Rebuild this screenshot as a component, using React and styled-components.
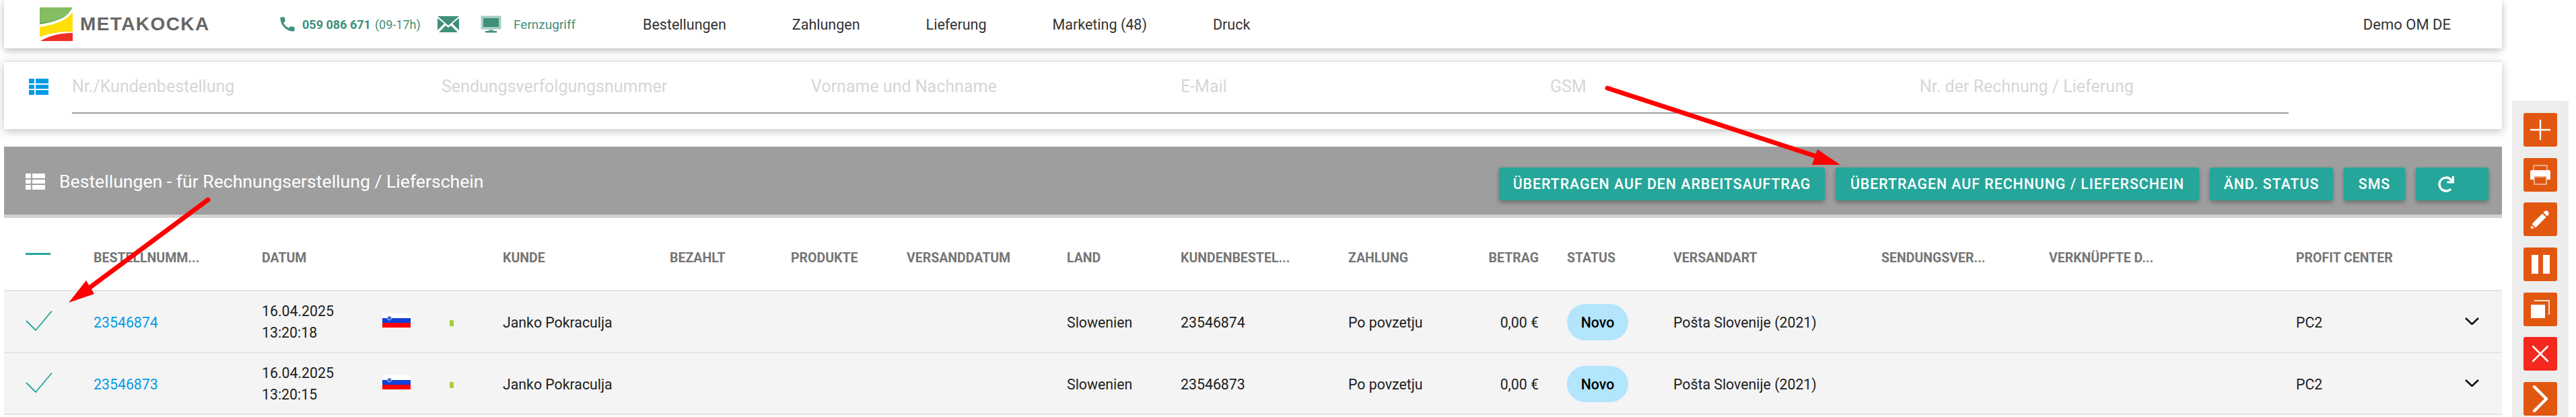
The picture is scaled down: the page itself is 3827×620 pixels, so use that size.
import React from 'react';
import styled, { createGlobalStyle } from 'styled-components';
import { MdCall } from 'react-icons/md';
import { FaRedo } from 'react-icons/fa';

const GlobalStyle = createGlobalStyle`
  html, body {
    margin: 0;
    padding: 0;
    background: #fff;
    overflow: hidden;
  }
  body {
    font-family: Roboto, "Liberation Sans", sans-serif;
    color: #212121;
  }
`;

const Page = styled.div`
  position: relative;
  width: 3827px;
  height: 620px;
  overflow: hidden;
  display: flex;
  align-items: flex-start;
  padding-left: 6px;
  box-sizing: border-box;
`;

const Main = styled.div`
  width: 3711px;
  flex: none;
  display: flex;
  flex-direction: column;
`;

const TopBar = styled.header`
  height: 72px;
  background: #fff;
  box-shadow: 0 3px 10px rgba(0, 0, 0, 0.28);
  display: flex;
  align-items: center;
  padding-left: 53px;
  position: relative;
  z-index: 2;
`;

const Logo = styled.div`
  display: flex;
  align-items: center;
  gap: 11px;
  width: 354px;
  flex: none;
`;

const LogoText = styled.span`
  font-family: "Liberation Sans", Arial, sans-serif;
  font-weight: 700;
  font-size: 28px;
  letter-spacing: 1.4px;
  color: #666;
`;

const Contact = styled.div`
  display: flex;
  align-items: center;
  color: #3f8f79;
  width: 542px;
  flex: none;
  font-size: 18px;
`;

const Phone = styled.span`
  display: flex;
  align-items: center;
  width: 237px;
  flex: none;
  gap: 8px;
  b { font-weight: 700; margin-right: 6px; }
`;

const MailSlot = styled.span`
  display: flex;
  width: 64px;
  flex: none;
`;

const ScreenSlot = styled.span`
  display: flex;
  width: 49px;
  flex: none;
`;

const RemoteLabel = styled.span`
  font-size: 19px;
`;

const Nav = styled.nav`
  display: flex;
  gap: 98px;
  flex: 1;
  font-size: 21.5px;
  color: #333;
`;

const UserName = styled.div`
  font-size: 22px;
  color: #333;
  margin-right: 76px;
`;

const FilterCard = styled.section`
  margin-top: 19px;
  height: 101px;
  box-sizing: border-box;
  background: #fff;
  border-top: 1px solid #ddd;
  box-shadow: 0 3px 12px rgba(0, 0, 0, 0.25);
  display: flex;
  padding: 25px 0 0 37px;
  position: relative;
  z-index: 1;
`;

const FilterIcon = styled.div`
  width: 64px;
  flex: none;
`;

const FilterFields = styled.div`
  width: 3293px;
  height: 50px;
  display: grid;
  grid-template-columns: repeat(6, 549px);
  border-bottom: 2px solid #9e9e9e;
`;

const Placeholder = styled.div`
  font-size: 25px;
  line-height: 24px;
  white-space: nowrap;
  color: #d6d6d6;
`;

const OrdersHead = styled.div`
  margin-top: 26px;
  height: 101px;
  box-sizing: content-box;
  background: #9e9e9e;
  border-bottom: 5px solid #d2d2d2;
  display: flex;
  align-items: flex-start;
  justify-content: space-between;
`;

const OrdersTitle = styled.h2`
  margin: 37px 0 0 32px;
  display: flex;
  align-items: center;
  gap: 21px;
  font-size: 26.6px;
  line-height: 30px;
  font-weight: 400;
  color: #fff;
`;

const Actions = styled.div`
  margin: 31px 20px 0 0;
  display: flex;
  gap: 16px;
`;

const ActionButton = styled.button`
  height: 49px;
  width: ${(props) => props.$width}px;
  border: none;
  border-radius: 3px;
  background: #26a69a;
  color: #fff;
  font-family: inherit;
  font-size: 21.3px;
  font-weight: 500;
  letter-spacing: 1px;
  white-space: nowrap;
  text-transform: uppercase;
  box-shadow: 0 3px 6px rgba(0, 0, 0, 0.3);
  display: flex;
  align-items: center;
  justify-content: ${(props) => (props.$iconOnly ? 'flex-start' : 'center')};
  box-sizing: border-box;
  padding: 0 0 0 ${(props) => (props.$iconOnly ? 33 : 0)}px;
`;

const COLUMNS =
  '101px 250px 179px 100px 79px 248px 180px 172px 238px 169px 249px 150px 133px 42px 158px 309px 249px 367px 251px 21px';

const Table = styled.div`
  background: #fff;
`;

const Row = styled.div`
  display: grid;
  grid-template-columns: ${COLUMNS};
  padding: ${(props) => (props.$head ? 0 : 2)}px 0 0 32px;
  align-items: center;
  box-sizing: border-box;
  height: ${(props) => props.$height}px;
  background: ${(props) => (props.$head ? '#fff' : '#f4f4f4')};
  border-bottom: 2px solid #e4e4e4;
`;

const HeadCell = styled.div`
  font-size: 19.5px;
  font-weight: 700;
  color: #757575;
  white-space: nowrap;
  margin-top: 12px;
  text-align: ${(props) => (props.$right ? 'right' : 'left')};
`;

const CheckDash = styled.div`
  width: 37px;
  height: 3px;
  background: #26a69a;
`;

const CheckBox = styled.div`
  display: flex;
  margin-top: -4px;
`;

const Cell = styled.div`
  font-size: 21.3px;
  color: #212121;
  white-space: nowrap;
  text-align: ${(props) => (props.$right ? 'right' : 'left')};
`;

const DateCell = styled(Cell)`
  line-height: 32px;
`;

const OrderLink = styled.a`
  color: #039be5;
  text-decoration: none;
`;

const FlagBox = styled.div`
  display: flex;
  margin-top: -5px;
`;

const StatusDot = styled.div`
  width: 6px;
  height: 9px;
  margin-top: 3px;
  background: #a8cf38;
`;

const ChevronBox = styled.div`
  display: flex;
  margin-top: -4px;
`;

const Badge = styled.div`
  width: 91px;
  height: 54px;
  border-radius: 27px;
  background: #b3e5fc;
  color: #000;
  font-size: 21.3px;
  font-weight: 500;
  display: flex;
  align-items: center;
  justify-content: center;
`;

const SideRail = styled.aside`
  margin: 150px 0 0 15px;
  width: 84px;
  height: 470px;
  background: #ededed;
  flex: none;
  display: flex;
  flex-direction: column;
  align-items: center;
  gap: 16.7px;
  padding-top: 18px;
  box-sizing: border-box;
`;

const RailButton = styled.div`
  width: 50px;
  height: 50px;
  flex: none;
  border-radius: 3px;
  background: ${(props) => (props.$danger ? '#f4281e' : '#e25710')};
  display: flex;
  align-items: center;
  justify-content: center;
`;

const ArrowLayer = styled.svg`
  position: absolute;
  inset: 0;
  width: 3827px;
  height: 620px;
  pointer-events: none;
  z-index: 5;
`;

const ListIcon = ({ color }) => (
  <svg width="29" height="24" viewBox="0 0 29 24" fill={color}>
    <rect x="0" y="0" width="8" height="7" />
    <rect x="10" y="0" width="19" height="7" />
    <rect x="0" y="9" width="8" height="6" />
    <rect x="10" y="9" width="19" height="6" />
    <rect x="0" y="17" width="8" height="7" />
    <rect x="10" y="17" width="19" height="7" />
  </svg>
);

const LogoMark = () => (
  <svg width="49" height="50" viewBox="0 0 49 50">
    <path d="M0 0H49C41 15 22 22 0 25Z" fill="#84bd62" />
    <path d="M0 25C22 22 41 15 45 7C36 16 20 21 0 23Z" fill="#4f9a45" opacity="0.6" />
    <path d="M49 7V36C28 36 12 39 0 44V29C24 26 41 18 49 7Z" fill="#ffde0a" />
    <path d="M49 38V50H1C12 43 28 38 49 38Z" fill="#f12c26" />
  </svg>
);

const MailIcon = () => (
  <svg width="32" height="24" viewBox="0 0 32 24">
    <path d="M0 0H32L16 14Z" fill="#3f8f79" />
    <path d="M0 3V21L10 11Z" fill="#3f8f79" />
    <path d="M32 3V21L22 11Z" fill="#3f8f79" />
    <path d="M2 24L12 14L16 17L20 14L30 24Z" fill="#3f8f79" />
  </svg>
);

const ScreenIcon = () => (
  <svg width="31" height="26" viewBox="0 0 31 26">
    <rect x="0.5" y="0.5" width="30" height="20" fill="#a9cdc2" />
    <rect x="4" y="4" width="23" height="13" fill="#3f8f79" />
    <rect x="12" y="21" width="7" height="2" fill="#7fb3a3" />
    <rect x="7" y="23" width="17" height="2.5" fill="#3f8f79" />
  </svg>
);

const PlusGlyph = () => (
  <svg width="30" height="30" viewBox="0 0 30 30" stroke="#fff" strokeWidth="2.4">
    <path d="M15 0V30M0 15H30" />
  </svg>
);

const PrintGlyph = () => (
  <svg width="30" height="30" viewBox="0 0 30 30">
    <path d="M5 9V1H25V9" fill="none" stroke="#f3c6ac" strokeWidth="1.4" />
    <path d="M2 8H28Q30 8 30 10V22H24V17H6V22H0V10Q0 8 2 8Z" fill="#fff" />
    <path d="M6 18H24V29H6Z" fill="none" stroke="#f3c6ac" strokeWidth="1.6" />
  </svg>
);

const PencilGlyph = () => (
  <svg width="28" height="28" viewBox="0 0 28 28" fill="#fff">
    <path d="M20 2.5Q23 0 25.5 2.5Q28 5 25.5 8L24 9.5L18.5 4Z" />
    <path d="M17 5.5L22.5 11L7 26.5L1.5 21Z" />
    <path d="M0.5 23L5 27.5L0 28Z" />
  </svg>
);

const PauseGlyph = () => (
  <svg width="27" height="28" viewBox="0 0 27 28" fill="#fff">
    <rect x="0" y="0" width="10" height="28" />
    <rect x="17" y="0" width="10" height="28" />
  </svg>
);

const CopyGlyph = () => (
  <svg width="28" height="28" viewBox="0 0 28 28">
    <path d="M5 1H27V22" fill="none" stroke="#fbe0d0" strokeWidth="2" />
    <rect x="0" y="7" width="21" height="20" fill="#fff" />
  </svg>
);

const CloseGlyph = () => (
  <svg width="24" height="24" viewBox="0 0 24 24" stroke="#fff" strokeWidth="2.6" strokeLinecap="round">
    <path d="M1 1L23 23M23 1L1 23" />
  </svg>
);

const NextGlyph = () => (
  <svg width="24" height="40" viewBox="0 0 24 40" fill="none" stroke="#fff" strokeWidth="4.4" strokeLinecap="round" strokeLinejoin="round">
    <path d="M3 2L21 20L3 38" />
  </svg>
);

const CheckMark = () => (
  <svg width="40" height="30" viewBox="0 0 40 30" fill="none" stroke="#26a69a" strokeWidth="1.8">
    <path d="M1 15L15 29L39 0.5" />
  </svg>
);

const Chevron = () => (
  <svg width="21" height="11" viewBox="0 0 21 11" fill="none" stroke="#111" strokeWidth="2.6">
    <path d="M1 1L10.5 10L20 1" />
  </svg>
);

const Flag = () => (
  <svg width="42" height="21" viewBox="0 0 42 21">
    <rect width="42" height="7" fill="#fff" />
    <rect y="7" width="42" height="7" fill="#1240d8" />
    <rect y="14" width="42" height="7" fill="#ff0000" />
    <circle cx="10.5" cy="7" r="3" fill="#3a62d8" stroke="#c8d4f4" strokeWidth="0.8" />
  </svg>
);

const NAV_ITEMS = ['Bestellungen', 'Zahlungen', 'Lieferung', 'Marketing (48)', 'Druck'];

const FILTERS = [
  'Nr./Kundenbestellung',
  'Sendungsverfolgungsnummer',
  'Vorname und Nachname',
  'E-Mail',
  'GSM',
  'Nr. der Rechnung / Lieferung',
];

const ORDERS = [
  { id: '23546874', time: '13:20:18' },
  { id: '23546873', time: '13:20:15' },
];

export default function App() {
  return (
    <Page>
      <GlobalStyle />
      <Main>
        <TopBar>
          <Logo>
            <LogoMark />
            <LogoText>METAKOCKA</LogoText>
          </Logo>
          <Contact>
            <Phone>
              <MdCall size={28} />
              <span><b>059 086 671</b>(09-17h)</span>
            </Phone>
            <MailSlot><MailIcon /></MailSlot>
            <ScreenSlot><ScreenIcon /></ScreenSlot>
            <RemoteLabel>Fernzugriff</RemoteLabel>
          </Contact>
          <Nav>
            {NAV_ITEMS.map((item) => (
              <span key={item}>{item}</span>
            ))}
          </Nav>
          <UserName>Demo OM DE</UserName>
        </TopBar>

        <FilterCard>
          <FilterIcon><ListIcon color="#039be5" /></FilterIcon>
          <FilterFields>
            {FILTERS.map((label) => (
              <Placeholder key={label}>{label}</Placeholder>
            ))}
          </FilterFields>
        </FilterCard>

        <OrdersHead>
          <OrdersTitle>
            <ListIcon color="#fff" />
            Bestellungen - für Rechnungserstellung / Lieferschein
          </OrdersTitle>
          <Actions>
            <ActionButton $width={484}>Übertragen auf den Arbeitsauftrag</ActionButton>
            <ActionButton $width={540}>Übertragen auf Rechnung / Lieferschein</ActionButton>
            <ActionButton $width={183}>Änd. Status</ActionButton>
            <ActionButton $width={91}>SMS</ActionButton>
            <ActionButton $iconOnly $width={108}><FaRedo size={24} /></ActionButton>
          </Actions>
        </OrdersHead>

        <Table>
          <Row $head $height={109}>
            <CheckDash />
            <HeadCell>BESTELLNUMM...</HeadCell>
            <HeadCell>DATUM</HeadCell>
            <span />
            <span />
            <HeadCell>KUNDE</HeadCell>
            <HeadCell>BEZAHLT</HeadCell>
            <HeadCell>PRODUKTE</HeadCell>
            <HeadCell>VERSANDDATUM</HeadCell>
            <HeadCell>LAND</HeadCell>
            <HeadCell>KUNDENBESTEL...</HeadCell>
            <HeadCell>ZAHLUNG</HeadCell>
            <HeadCell $right>BETRAG</HeadCell>
            <span />
            <HeadCell>STATUS</HeadCell>
            <HeadCell>VERSANDART</HeadCell>
            <HeadCell>SENDUNGSVER...</HeadCell>
            <HeadCell>VERKNÜPFTE D...</HeadCell>
            <HeadCell>PROFIT CENTER</HeadCell>
            <span />
          </Row>
          {ORDERS.map((order) => (
            <Row key={order.id} $height={92}>
              <CheckBox><CheckMark /></CheckBox>
              <Cell><OrderLink href="#">{order.id}</OrderLink></Cell>
              <DateCell>16.04.2025<br />{order.time}</DateCell>
              <FlagBox><Flag /></FlagBox>
              <StatusDot />
              <Cell>Janko Pokraculja</Cell>
              <span />
              <span />
              <span />
              <Cell>Slowenien</Cell>
              <Cell>{order.id}</Cell>
              <Cell>Po povzetju</Cell>
              <Cell $right>0,00 €</Cell>
              <span />
              <Badge>Novo</Badge>
              <Cell>Pošta Slovenije (2021)</Cell>
              <span />
              <span />
              <Cell>PC2</Cell>
              <ChevronBox><Chevron /></ChevronBox>
            </Row>
          ))}
        </Table>
      </Main>

      <SideRail>
        <RailButton><PlusGlyph /></RailButton>
        <RailButton><PrintGlyph /></RailButton>
        <RailButton><PencilGlyph /></RailButton>
        <RailButton><PauseGlyph /></RailButton>
        <RailButton><CopyGlyph /></RailButton>
        <RailButton $danger><CloseGlyph /></RailButton>
        <RailButton><NextGlyph /></RailButton>
      </SideRail>

      <ArrowLayer viewBox="0 0 3827 620">
        <path d="M2388 131L2700 233" stroke="#ff0000" strokeWidth="7" strokeLinecap="round" fill="none" />
        <path d="M2734 245L2700 222L2692 245Z" fill="#ff0000" />
        <path d="M309 297L130 430" stroke="#ff0000" strokeWidth="7" strokeLinecap="round" fill="none" />
        <path d="M102 450L128 417L140 437Z" fill="#ff0000" />
      </ArrowLayer>
    </Page>
  );
}
